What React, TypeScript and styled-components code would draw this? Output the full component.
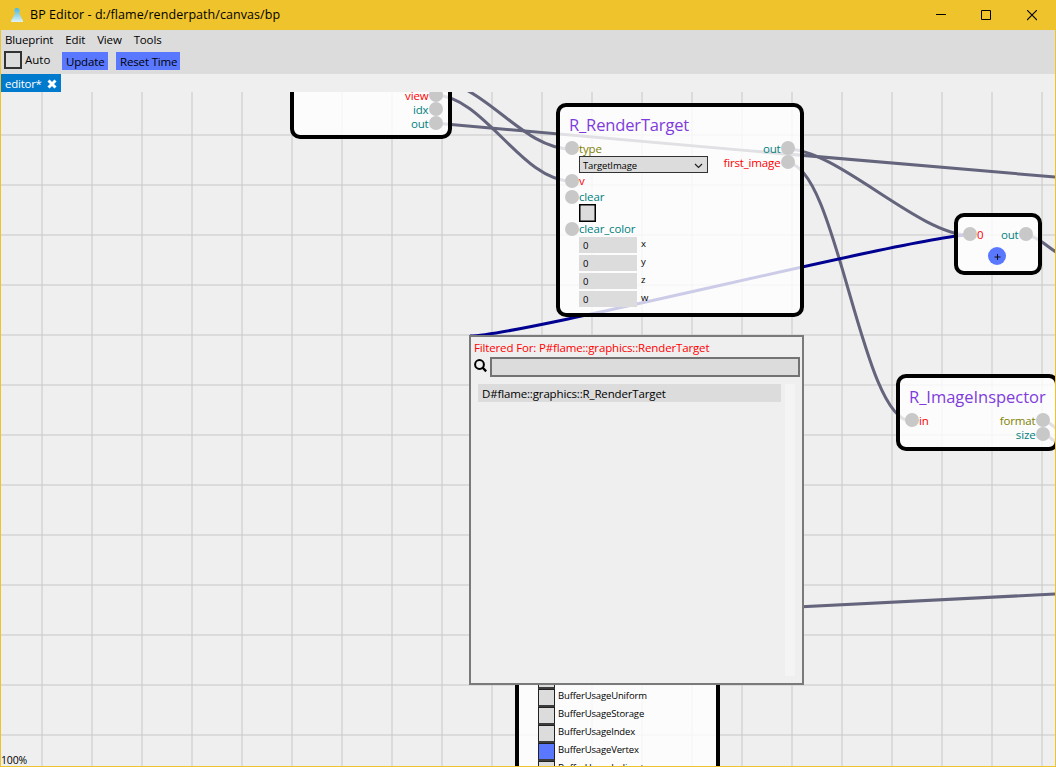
import React from 'react';
import styled, { createGlobalStyle } from 'styled-components';

const GlobalStyle = createGlobalStyle`
  * { box-sizing: border-box; }
  body { margin: 0; background: #efefef; font-family: "Open Sans", "Noto Sans", sans-serif; }
`;

const Window = styled.div`
  width: 1056px;
  height: 767px;
  display: flex;
  flex-direction: column;
  border: 1px solid #efc32b;
  border-top: 0;
  background: #efefef;
  color: #000;
  overflow: hidden;
  font-size: 11.5px;
`;

const TitleBar = styled.header`
  height: 30px;
  flex: none;
  display: flex;
  align-items: center;
  background: #efc32b;
  padding: 0 18px 0 9px;
  svg { display: block; }
`;

const Text = styled.span<{ $size?: number; $spacing?: number; $color?: string; $line?: number }>`
  display: block;
  white-space: nowrap;
  font-size: ${p => p.$size ?? 11.5}px;
  line-height: ${p => p.$line ?? 14}px;
  letter-spacing: ${p => p.$spacing ?? -0.15}px;
  color: ${p => p.$color ?? '#000'};
`;

const WindowTitle = styled(Text)`
  margin-left: 6px;
  flex: 1;
`;

const WindowButtons = styled.div`
  display: flex;
  gap: 35px;
  align-items: center;
`;

const TopArea = styled.div`
  height: 44px;
  flex: none;
  background: #dcdcdc;
`;

const MenuBar = styled.nav`
  height: 20px;
  display: flex;
  align-items: center;
  gap: 12px;
  padding-left: 4px;
`;

const Toolbar = styled.div`
  display: flex;
  align-items: flex-start;
  padding: 1px 0 0 3px;
`;

const Checkbox = styled.span<{ $on?: boolean; $soft?: boolean }>`
  display: block;
  flex: none;
  width: ${p => (p.$soft ? 18 : 17)}px;
  height: 18px;
  border: ${p => (p.$soft ? '2px solid #323232' : '1px solid #000')};
  box-shadow: ${p => (p.$soft ? 'none' : 'inset 0 0 0 0.5px #000')};
  background: ${p => (p.$on ? '#5a78ff' : '#dcdcdc')};
`;

const AutoLabel = styled(Text)`
  margin: 2px 0 0 3px;
  width: 37px;
`;

const Button = styled.button<{ $w: number }>`
  border: 0;
  margin: 1px 8px 0 0;
  width: ${p => p.$w}px;
  height: 18px;
  padding: 3px 4px 1px;
  background: #5a78ff;
  font-family: inherit;
  text-align: left;
`;

const TabBar = styled.div`
  height: 18px;
  flex: none;
  display: flex;
`;

const Tab = styled.div`
  width: 60px;
  background: #007acc;
  display: flex;
  align-items: center;
  justify-content: space-between;
  padding: 1px 4px 0 4px;
`;

const Canvas = styled.main`
  position: relative;
  flex: 1;
  overflow: hidden;
  background-color: #efefef;
`;

const Wires = styled.svg`
  position: absolute;
  left: 0;
  top: 0;
`;

const Node = styled.section<{ $x: number; $y: number; $w: number; $h: number }>`
  position: absolute;
  left: ${p => p.$x}px;
  top: ${p => p.$y}px;
  width: ${p => p.$w}px;
  height: ${p => p.$h}px;
  border: 4px solid #000;
  border-radius: 10px;
  background: rgba(255, 255, 255, 0.8);
  background-clip: padding-box;
  overflow: hidden;
`;

const NodeTitle = styled(Text)<{ $top?: number }>`
  padding: ${p => p.$top ?? 8}px 0 0 9px;
`;

const Slots = styled.div<{ $top?: number; $bottom?: boolean }>`
  display: flex;
  justify-content: space-between;
  padding: 0 5.5px 0 5px;
  margin-top: ${p => p.$top ?? 0}px;
  ${p => p.$bottom && 'height: 100%; align-items: flex-end; padding-bottom: 5px;'}
`;

const Column = styled.div<{ $end?: boolean }>`
  display: flex;
  flex-direction: column;
  align-items: ${p => (p.$end ? 'flex-end' : 'flex-start')};
`;

const Port = styled.div<{ $out?: boolean; $top?: number }>`
  display: flex;
  flex-direction: ${p => (p.$out ? 'row-reverse' : 'row')};
  align-items: center;
  height: 14px;
  margin-top: ${p => p.$top ?? 0}px;
`;

const PortLabel = styled(Text)`
  padding-top: 1px;
`;

const Dot = styled.i`
  width: 14px;
  height: 14px;
  flex: none;
  border-radius: 50%;
  background: #c8c8c8;
`;

const Field = styled.div`
  margin-left: 14px;
`;

const Select = styled.div`
  width: 129px;
  height: 17px;
  margin-top: 1px;
  border: 1px solid #323232;
  background: #dcdcdc;
  display: flex;
  align-items: center;
  justify-content: space-between;
  padding: 2px 4px 0 3px;
`;

const VectorRow = styled.div`
  display: flex;
  gap: 4px;
  height: 18px;
`;

const NumberBox = styled.div`
  width: 58px;
  height: 16px;
  margin-top: 1.5px;
  background: #dcdcdc;
  padding: 1.5px 4px;
`;

const AxisLabel = styled(Text)`
  margin-top: 1px;
`;

const AddRow = styled.div`
  display: flex;
  justify-content: center;
  padding: 6px 2px 0 0;
`;

const AddButton = styled.span`
  width: 18px;
  height: 18px;
  border-radius: 50%;
  background: #5a78ff;
  display: flex;
  align-items: center;
  justify-content: center;
`;

const FlagList = styled.div`
  display: flex;
  flex-direction: column;
  padding-left: 19px;
`;

const FlagRow = styled.div`
  display: flex;
  gap: 3px;
  height: 18px;
`;

const FlagBox = styled.span<{ $on?: boolean }>`
  width: 17px;
  height: 18px;
  border: 1px solid #222;
  border-bottom: 2px solid #3c3c3c;
  background: ${p => (p.$on ? '#5a78ff' : '#dcdcdc')};
`;

const Popup = styled.aside`
  position: absolute;
  left: 468px;
  top: 243px;
  width: 335px;
  height: 350px;
  border: 2px solid #7a7a7a;
  background: #efefef;
  padding: 4px 2px 4px 3px;
`;

const SearchRow = styled.div`
  display: flex;
  gap: 3px;
  margin-top: 2px;
`;

const SearchInput = styled.div`
  width: 310px;
  height: 20px;
  border: 2px solid #737373;
  background: #dcdcdc;
`;

const Results = styled.div`
  display: flex;
  justify-content: space-between;
  margin: 7px 5px 0 4px;
  height: 292px;
`;

const ResultItem = styled.div`
  width: 303px;
  height: 18px;
  background: #dcdcdc;
  padding: 3px 4px 1px;
`;

const ScrollTrack = styled.div`
  width: 10px;
  background: #f4f4f4;
`;

const Zoom = styled(Text)`
  position: absolute;
  left: 0;
  bottom: -1px;
`;

const RED = '#ff0000';
const TEAL = '#008080';
const OLIVE = '#808000';
const PURPLE = '#7f3bdc';

type PortProps = { name: string; color: string; out?: boolean; top?: number };
const PortRow = ({ name, color, out, top }: PortProps) => (
  <Port $out={out} $top={top}>
    <Dot />
    <PortLabel $color={color}>{name}</PortLabel>
  </Port>
);

const columns = Array.from({ length: 21 }, (_, i) => 41 + i * 50);
const rows = Array.from({ length: 13 }, (_, i) => 43 + i * 50);

const wires = [
  'M434 3 C484 3 521 89 571 89',
  'M434 -11 C484 -11 521 57 571 57',
  'M434 31 C484 35 1005 82 1055 85',
  'M787 57 C837 57 919 143 969 143',
  'M787 71 C837 71 861 329 911 329',
  'M1024 143 C1036 143 1045 153 1056 160',
  'M1042 329 C1048 329 1052 333 1058 338',
  'M1042 343 C1048 343 1052 347 1058 352',
  'M700 520 C760 517.500 900 509 1055 502',
];

export default function App() {
  return (
    <>
      <GlobalStyle />
      <Window>
        <TitleBar>
          <svg width="14" height="16" viewBox="0 0 14 16">
            <defs>
              <linearGradient id="flame" x1="0" y1="0" x2="0" y2="1">
                <stop offset="0" stopColor="#42b8e8" />
                <stop offset="1" stopColor="#e2f2f4" />
              </linearGradient>
            </defs>
            <path d="M6.5 1 C8.8 1 10.200 2.500 9.800 4.500 L9.200 6 C9.500 8 11.500 9.500 11.700 11.500 C12.700 12 13 13.500 13 15 H1 C1 13.500 1.500 12 2.500 11.500 C3 9.500 4.700 8 5 6 L4.300 4 C4.100 2.500 5 1 6.500 1Z" fill="url(#flame)" />
          </svg>
          <WindowTitle $size={12.5} $line={18} $spacing={0.06}>BP Editor - d:/flame/renderpath/canvas/bp</WindowTitle>
          <WindowButtons>
            <svg width="10" height="11"><path d="M0 4.500H10" stroke="#000" /></svg>
            <svg width="11" height="11"><path d="M.5 .5H9.500V9.500H.5Z" stroke="#000" fill="none" /></svg>
            <svg width="10" height="11"><path d="M0 0L10 10M10 0L0 10" stroke="#000" strokeWidth="1.100" /></svg>
          </WindowButtons>
        </TitleBar>
        <TopArea>
          <MenuBar>
            {['Blueprint', 'Edit', 'View', 'Tools'].map(m => <Text key={m}>{m}</Text>)}
          </MenuBar>
          <Toolbar>
            <Checkbox $soft />
            <AutoLabel $spacing={0}>Auto</AutoLabel>
            <Button $w={46}><Text>Update</Text></Button>
            <Button $w={64}><Text>Reset Time</Text></Button>
          </Toolbar>
        </TopArea>
        <TabBar>
          <Tab>
            <Text $color="#fff" $spacing={-0.25}>editor*</Text>
            <svg width="10" height="10"><path d="M1.500 1.500L8.500 8.500M8.500 1.500L1.500 8.500" stroke="#fff" strokeWidth="3" /></svg>
          </Tab>
        </TabBar>
        <Canvas>
          <Wires width="1054" height="674" viewBox="1 0 1054 674">
            <g fill="#c8c8c8" fillOpacity="0.5">
              {columns.map(x => <rect key={x} x={x} y="0" width="2" height="674" />)}
              {rows.map(y => <rect key={y} x="0" y={y - 1} width="1056" height="2" />)}
            </g>
            <g fill="none" stroke="#64647d" strokeWidth="3">
              {wires.map(d => <path key={d} d={d} />)}
            </g>
            <path d="M470 244 C520 244 919 143 969 143" fill="none" stroke="#000091" strokeWidth="3" />
          </Wires>

          <Node $x={289} $y={-60} $w={162} $h={107}>
            <Slots $bottom>
              <Column />
              <Column $end>
                <PortRow out name="view" color={RED} />
                <PortRow out name="idx" color={TEAL} />
                <PortRow out name="out" color={TEAL} />
              </Column>
            </Slots>
          </Node>

          <Node $x={555} $y={10.5} $w={248} $h={214.5}>
            <NodeTitle $size={16.5} $line={20} $color={PURPLE}>R_RenderTarget</NodeTitle>
            <Slots $top={6.5}>
              <Column>
                <PortRow name="type" color={OLIVE} />
                <Field>
                  <Select>
                    <Text $size={9.5}>TargetImage</Text>
                    <svg width="9" height="6"><path d="M1 1L4.500 4.500L8 1" fill="none" stroke="#222" strokeWidth="1.200" /></svg>
                  </Select>
                </Field>
                <PortRow name="v" color={RED} top={0.5} />
                <PortRow name="clear" color={TEAL} top={2} />
                <Field><Checkbox /></Field>
                <PortRow name="clear_color" color={TEAL} />
                <Field>
                  {['x', 'y', 'z', 'w'].map(n => (
                    <VectorRow key={n}>
                      <NumberBox><Text $size={9.5}>0</Text></NumberBox>
                      <AxisLabel $size={9.5}>{n}</AxisLabel>
                    </VectorRow>
                  ))}
                </Field>
              </Column>
              <Column $end>
                <PortRow out name="out" color={TEAL} />
                <PortRow out name="first_image" color={RED} />
              </Column>
            </Slots>
          </Node>

          <Node $x={953} $y={121} $w={88} $h={62}>
            <Slots $top={10}>
              <PortRow name="0" color={RED} />
              <PortRow out name="out" color={TEAL} />
            </Slots>
            <AddRow>
              <AddButton>
                <svg width="7" height="7"><path d="M3.500 1V7M.5 4H6.500" stroke="#111" /></svg>
              </AddButton>
            </AddRow>
          </Node>

          <Node $x={895} $y={282} $w={163} $h={77}>
            <NodeTitle $size={16.5} $line={20} $color={PURPLE} $top={9} $spacing={-0.03}>R_ImageInspector</NodeTitle>
            <Slots $top={6}>
              <PortRow name="in" color={RED} />
              <Column $end>
                <PortRow out name="format" color={OLIVE} />
                <PortRow out name="size" color={TEAL} />
              </Column>
            </Slots>
          </Node>

          <Node $x={514} $y={575} $w={205} $h={150}>
            <FlagList>
              {['BufferUsageTransferDst', 'BufferUsageUniform', 'BufferUsageStorage', 'BufferUsageIndex', 'BufferUsageVertex', 'BufferUsageIndirect'].map(n => (
                <FlagRow key={n}>
                  <FlagBox $on={n === 'BufferUsageVertex'} />
                  <Text $size={9.5}>{n}</Text>
                </FlagRow>
              ))}
            </FlagList>
          </Node>

          <Popup>
            <Text $color={RED}>Filtered For: P#flame::graphics::RenderTarget</Text>
            <SearchRow>
              <svg width="13" height="16"><circle cx="5.500" cy="7.500" r="4.400" fill="none" stroke="#000" strokeWidth="2" /><path d="M8.500 10.500L12.200 14.300" stroke="#000" strokeWidth="2.400" /></svg>
              <SearchInput />
            </SearchRow>
            <Results>
              <ResultItem><Text>D#flame::graphics::R_RenderTarget</Text></ResultItem>
              <ScrollTrack />
            </Results>
          </Popup>

          <Zoom $size={10.5}>100%</Zoom>
        </Canvas>
      </Window>
    </>
  );
}
